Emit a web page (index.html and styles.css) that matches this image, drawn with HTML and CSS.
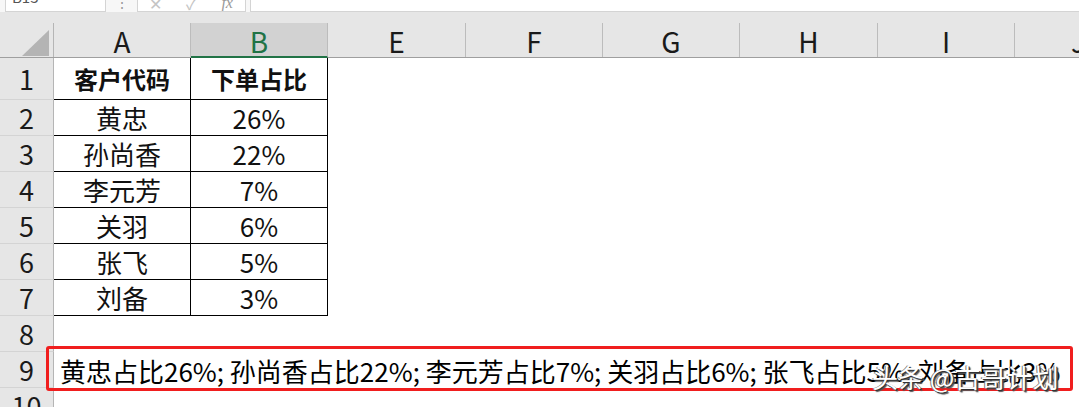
FILE: index.html
```html
<!DOCTYPE html>
<html lang="zh-CN">
<head>
  <meta charset="UTF-8">
  <title>下单占比</title>
  <link rel="stylesheet" href="styles.css">
</head>
<body>
  <div class="toolbar">
    <div class="name-box"><span>B13</span></div>
    <div class="grip">&#8942;</div>
    <div class="fx-box">
      <span class="btn">&#10005;</span>
      <span class="btn">&#10003;</span>
      <span class="btn fx">fx</span>
    </div>
    <div class="formula"></div>
  </div>

  <div class="sheet">
    <div class="row head-row">
      <div class="corner">
        <svg width="28" height="27" viewBox="0 0 28 27"><polygon points="27,0 27,26 0,26" fill="#b4b4b4"/></svg>
      </div>
      <div class="col-head">A</div>
      <div class="col-head active">B</div>
      <div class="col-head wide">E</div>
      <div class="col-head">F</div>
      <div class="col-head">G</div>
      <div class="col-head wide">H</div>
      <div class="col-head">I</div>
      <div class="col-head last">J</div>
    </div>

    <div class="row first">
      <div class="row-head">1</div>
      <div class="cell th">客户代码</div>
      <div class="cell th">下单占比</div>
    </div>
    <div class="row">
      <div class="row-head">2</div>
      <div class="cell">黄忠</div>
      <div class="cell">26%</div>
    </div>
    <div class="row">
      <div class="row-head">3</div>
      <div class="cell">孙尚香</div>
      <div class="cell">22%</div>
    </div>
    <div class="row">
      <div class="row-head">4</div>
      <div class="cell">李元芳</div>
      <div class="cell">7%</div>
    </div>
    <div class="row">
      <div class="row-head">5</div>
      <div class="cell">关羽</div>
      <div class="cell">6%</div>
    </div>
    <div class="row">
      <div class="row-head">6</div>
      <div class="cell">张飞</div>
      <div class="cell">5%</div>
    </div>
    <div class="row">
      <div class="row-head">7</div>
      <div class="cell">刘备</div>
      <div class="cell">3%</div>
    </div>
    <div class="row">
      <div class="row-head">8</div>
    </div>
    <div class="row">
      <div class="row-head">9</div>
      <div class="long">黄忠占比26%; 孙尚香占比22%; 李元芳占比7%; 关羽占比6%; 张飞占比5%; 刘备占比3%</div>
    </div>
    <div class="row">
      <div class="row-head">10</div>
    </div>

    <!-- annotation box + watermark sit over the sheet -->
    <div class="mark"></div>
    <div class="watermark">头条 @古哥计划</div>
  </div>
</body>
</html>
```

FILE: styles.css
```css
* {
  box-sizing: border-box;
}

body {
  margin: 0;
  width: 1079px;
  height: 407px;
  overflow: hidden;
  background: #fff;
  font-family: "Noto Sans CJK SC", "Noto Sans", sans-serif;
  color: #111;
}

/* formula bar (cut off at the top) */
.toolbar {
  display: flex;
  height: 12px;
  background: #f7f7f7;
  overflow: hidden;
}

.name-box {
  width: 101px;
  margin-left: 5px;
  background: #fff;
  border: 1px solid #d4d4d4;
  border-top: 0;
  position: relative;
  overflow: hidden;
}

.name-box span {
  position: absolute;
  left: 6px;
  top: -14px;
  font-size: 15px;
  color: #555;
}

.grip {
  width: 31px;
  text-align: center;
  font-size: 14px;
  line-height: 4px;
  color: #999;
}

.fx-box {
  display: flex;
  width: 109px;
  background: #fff;
  border: 1px solid #d4d4d4;
  border-top: 0;
  overflow: hidden;
}

.btn {
  width: 36px;
  text-align: center;
  font-size: 16px;
  line-height: 6px;
  color: #c4c4c4;
}

.fx {
  font-family: "Liberation Serif", serif;
  font-style: italic;
  color: #999;
}

.formula {
  flex: 1;
  margin-left: 4px;
  background: #fff;
  border: 1px solid #d4d4d4;
  border-top: 0;
  border-right: 0;
}

/* sheet */
.sheet {
  position: relative;
  overflow: hidden;
}

.row {
  display: flex;
  height: 36px;
}

.row.first {
  height: 42px;
}

.head-row {
  height: 46px;
  background: #e6e6e6;
  border-bottom: 1px solid #9f9f9f;
  align-items: flex-end;
}

.corner {
  width: 54px;
  height: 34px;
  flex-shrink: 0;
  border-right: 1px solid #b5b5b5;
  display: flex;
  justify-content: flex-end;
  align-items: flex-end;
  padding-right: 3px;
}

.corner svg {
  display: block;
}

.col-head {
  width: 137px;
  height: 34px;
  flex-shrink: 0;
  border-right: 1px solid #bcbcbc;
  text-align: center;
  font-size: 28px;
  line-height: 36px;
  color: #1a1a1a;
}

.col-head.wide {
  width: 138px;
}

/* only the left sliver of J is on screen */
.col-head.last {
  width: 65px;
  text-align: right;
  padding-right: 0;
  overflow: hidden;
  border-right: 0;
  text-indent: 56px;
  text-align: left;
}

.col-head.active {
  height: 35px;
  margin-bottom: -1px;
  background: #d2d2d2;
  border-bottom: 2px solid #217346;
  color: #217346;
}

.row-head {
  width: 54px;
  flex-shrink: 0;
  background: #e6e6e6;
  border-right: 1px solid #b5b5b5;
  border-bottom: 1px solid #d4d4d4;
  text-align: center;
  font-size: 27px;
  display: flex;
  align-items: center;
  justify-content: center;
  color: #1a1a1a;
}

.cell {
  width: 137px;
  flex-shrink: 0;
  border-right: 1px solid #000;
  border-bottom: 1px solid #000;
  display: flex;
  align-items: center;
  justify-content: center;
  font-size: 26px;
}

.cell.th {
  font-size: 24px;
  font-weight: bold;
}

.long {
  padding-left: 6px;
  display: flex;
  align-items: center;
  white-space: nowrap;
  font-size: 26px;
  color: #000;
}

.mark {
  position: absolute;
  left: 46px;
  top: 334px;
  width: 1027px;
  height: 45px;
  border: 3px solid #f01e1e;
  border-radius: 3px;
}

.watermark {
  position: absolute;
  left: 872px;
  top: 346px;
  font-size: 26px;
  white-space: nowrap;
  color: #fff;
  text-shadow: 1px 1px 0 #333, 2px 2px 1px #555, -1px 0 0 #777;
}
```
